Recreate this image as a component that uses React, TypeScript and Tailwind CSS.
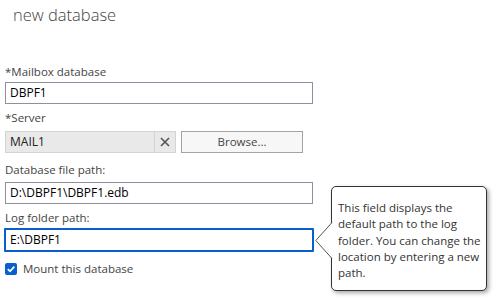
import React from "react";

const font = { fontFamily: '"Open Sans", "Noto Sans", sans-serif' };

function Label({ children, className = "" }: { children: React.ReactNode; className?: string }) {
  return <div className={`text-[11.5px] leading-[16px] text-[#444] ${className}`}>{children}</div>;
}

export default function App() {
  return (
    <div className="relative w-[496px] h-[301px] bg-white overflow-hidden" style={font}>
      <div className="pl-[13px] pt-[4px] text-[16.5px] leading-[22px] font-light text-[#444]">new database</div>
      <div className="w-[318px] pl-[5px] pr-[5px] pt-[38px] flex flex-col">
        <Label>*Mailbox database</Label>
        <div className="mt-[2px] h-[22px] border border-[#8f8fa0] bg-white flex items-center px-[4px] text-[12px] text-black">DBPF1</div>

        <Label className="mt-[6px]">*Server</Label>
        <div className="mt-[5px] flex h-[22px]">
          <div className="w-[150px] h-full bg-[#e9e9e9] border border-[#d4d4d4] flex items-center px-[4px] text-[12px] text-[#222]">MAIL1</div>
          <div className="w-[21px] h-full bg-[#e9e9e9] border border-l-0 border-[#d4d4d4] flex items-center justify-center">
            <svg width="10" height="10" viewBox="0 0 10 10">
              <path d="M1 1 L9 9 M9 1 L1 9" stroke="#555" strokeWidth="1.6" />
            </svg>
          </div>
          <div className="ml-[5px] w-[122px] h-full bg-[#f7f7f7] border border-[#a3a3a3] flex items-center justify-center text-[11.5px] text-[#444]">Browse...</div>
        </div>

        <Label className="mt-[9px]">Database file path:</Label>
        <div className="mt-[4px] h-[22px] border border-[#8f8fa0] bg-white flex items-center px-[4px] text-[12px] text-black">D:\DBPF1\DBPF1.edb</div>

        <Label className="mt-[6px]">Log folder path:</Label>
        <div className="mt-[2px] -mx-px h-[24px] border-2 border-[#0a5fd0] rounded-[1px] bg-white flex items-center px-[4px] text-[12px] text-black">E:\DBPF1</div>

        <div className="mt-[9px] flex items-center gap-[6px]">
          <div className="w-[12px] h-[12px] rounded-[2px] bg-[#0a5fd0] flex items-center justify-center">
            <svg width="10" height="10" viewBox="0 0 10 10">
              <path d="M1.8 5.2 L4 7.3 L8.3 2.6" stroke="white" strokeWidth="1.7" fill="none" />
            </svg>
          </div>
          <span className="text-[11.5px] leading-[16px] text-[#444]">Mount this database</span>
        </div>
      </div>

      <div className="absolute left-[331px] top-[186px] w-[156px] h-[105px] bg-white border border-[#333] rounded-[5px] shadow-[2px_2px_4px_rgba(0,0,0,0.35)] pl-[6px] pr-[2px] pt-[13px] text-[11.5px] leading-[16.3px] text-[#333] whitespace-nowrap">
        This field displays the<br />default path to the log<br />folder. You can change the<br />location by entering a new<br />path.
      </div>
      <svg className="absolute left-[315px] top-[222px]" width="18" height="37" viewBox="0 0 18 37">
        <path d="M17 0.5 L0.8 18.5 L17 36.5" fill="white" stroke="#555" strokeWidth="1" />
        <rect x="17" y="1" width="1" height="35" fill="white" />
      </svg>
    </div>
  );
}
